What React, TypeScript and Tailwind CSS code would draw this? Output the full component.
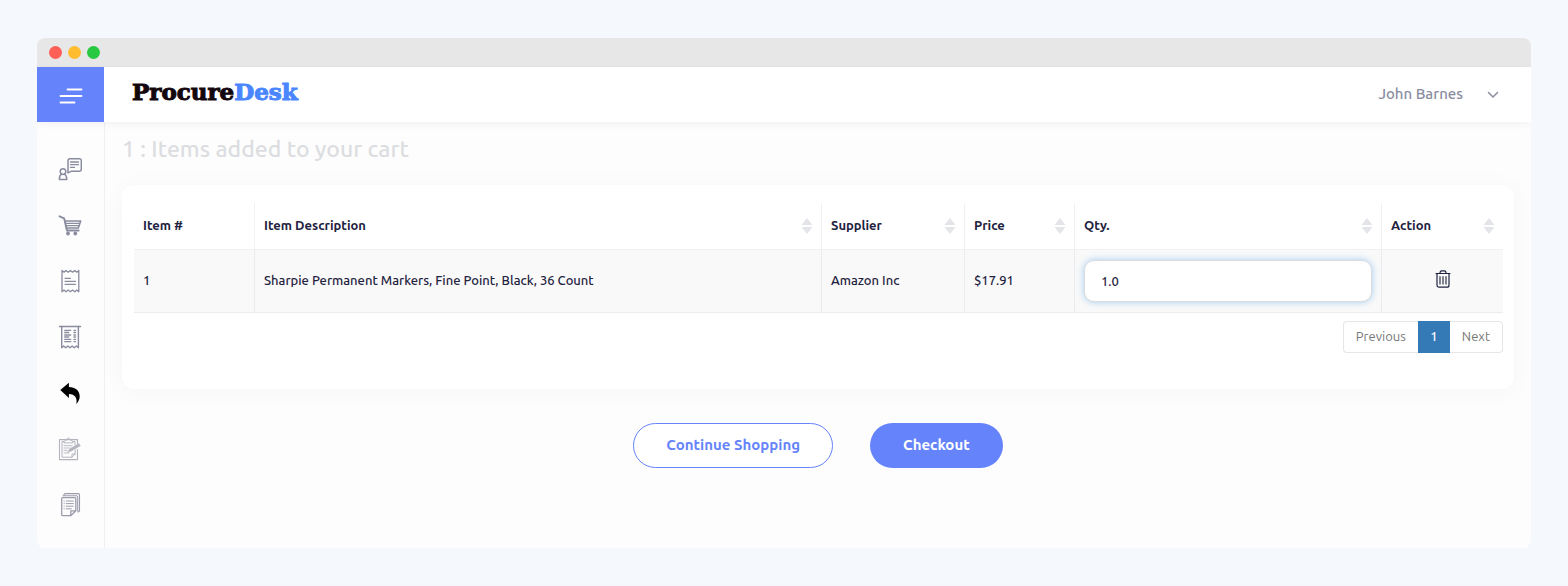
import { useState } from 'react';
import type { ReactNode } from 'react';

const NavIcon = (props: { className?: string; children: ReactNode }) => (
  <svg
    viewBox="0 0 24 24"
    fill="none"
    stroke="currentColor"
    strokeLinecap="round"
    strokeLinejoin="round"
    aria-hidden="true"
    className={`w-6 h-6 ${props.className ?? 'text-[#8a8c9f]'}`}
  >
    {props.children}
  </svg>
);

const navItems = [
  {
    label: 'Requests',
    icon: (
      <NavIcon>
        <path
          d="M11.7 1.7h9.6a2 2 0 0 1 2 2v8.6a2 2 0 0 1-2 2h-8.1L10 15.9V3.7a2 2 0 0 1 1.7-2z"
          strokeWidth="1.5"
        />
        <path d="M12.5 5h8M12.5 7.7h8M12.5 10.4h4" strokeWidth="1.3" />
        <circle cx="5" cy="14.6" r="2.8" strokeWidth="1.5" />
        <path d="M3.6 17.2C2 18 1.4 19.5 1.3 22.4h7.5C8.7 19.5 8 18 6.4 17.2" strokeWidth="1.5" />
      </NavIcon>
    ),
  },
  {
    label: 'Cart',
    icon: (
      <NavIcon>
        <path d="M1.5 3.3l4.6 2 2.9 12.2h11.7" strokeWidth="1.9" />
        <path d="M6.8 8h15.9l-2.4 7H8.5" strokeWidth="1.6" />
        <path d="M7.5 10.3h14M8 12.7h13" strokeWidth="1.2" />
        <circle cx="10" cy="20.5" r="1.9" fill="currentColor" stroke="none" />
        <circle cx="17.3" cy="20.5" r="1.9" fill="currentColor" stroke="none" />
      </NavIcon>
    ),
  },
  {
    label: 'Orders',
    icon: (
      <NavIcon>
        <path
          d="M4 1.5l2 1.7 2-1.7 2.2 1.7 2.2-1.7 2.2 1.7 2.2-1.7 2 1.7 2-1.7v21.3l-2-1.7-2 1.7-2.2-1.7-2.2 1.7-2.2-1.7L8 22.8l-2-1.7-2 1.7z"
          strokeWidth="1.3"
        />
        <path d="M7 9.3h5.5M7 12.3h10.5M7 15.3h10.5" strokeWidth="1.2" />
      </NavIcon>
    ),
  },
  {
    label: 'Invoices',
    icon: (
      <NavIcon>
        <path d="M1.5 1.5h21" strokeWidth="1.5" />
        <path
          d="M3.7 1.5v21.2l2-1.7 2.1 1.7L9.9 21l2.1 1.7 2.1-1.7 2.1 1.7 2.1-1.7 2.1 1.7V1.5"
          strokeWidth="1.4"
        />
        <path
          d="M6.7 5.3h6M6.7 7.5h4M6.7 10h6M6.7 12h4M6.7 14.4h6M6.7 16.6h6M16 5.3h1.5M16 7.5h1.5M16 10h1.5M16 12h1.5M16 14.4h1.5M16 16.6h1.5"
          strokeWidth="1.3"
        />
      </NavIcon>
    ),
  },
  {
    label: 'Returns',
    icon: (
      <NavIcon className="text-black">
        <path
          d="M2.3 9L10.9 1.7v4.4c6.4.1 10.6 3.5 10.8 9.2.1 2.8-1.2 5.6-3.4 7.6 1.3-5.8-1.3-9.7-7.4-9.9v4z"
          fill="currentColor"
          stroke="none"
        />
      </NavIcon>
    ),
  },
  {
    label: 'Approvals',
    icon: (
      <NavIcon className="text-[#b3b4be]">
        <path d="M19.5 12.5v10.1h-18V2.6h18v4" strokeWidth="1.1" />
        <path d="M6 4.5H4v15.7h10l3.2-3.2v-4M15 4.5h2v3.3M14 20.2V17h3.2" />
        <path d="M6 5.5c0-2 1.5-2.3 2.8-2.5.4-2.7 3-2.7 3.4 0 1.3.2 2.8.5 2.8 2.5z" />
        <path d="M6 8.7h8M6 11h6M6 13.3h3M6 16h5" strokeWidth="0.9" />
        <path d="M9.5 15l2.4-3.2 9-5.3 1.5 2.2-9 5.3z" fill="currentColor" strokeWidth="0.5" />
      </NavIcon>
    ),
  },
  {
    label: 'Reports',
    icon: (
      <NavIcon className="text-[#9b9cab]">
        <path
          d="M6 2V1.7A1.2 1.2 0 0 1 7.200.6h13.100a1.200 1.200 0 0 1 1.200 1.200V18l-1.500 1"
          strokeWidth="1.1"
        />
        <path d="M5 2.700h13.500a1.200 1.200 0 0 1 1.200 1.200v14" strokeWidth="1.1" />
        <path
          d="M4.700 4.700h12.100a1 1 0 0 1 1 1v12.100l-5 4.900H4.700a1 1 0 0 1-1-1v-16a1 1 0 0 1 1-1zM12.800 22.700v-4.900h5"
          strokeWidth="1.3"
        />
        <path d="M6 8h.3M8.3 8h7M6 10.6h.3M8.3 10.6h7M6 13.2h.3M8.3 13.2h7M6 15.8h.3M8.3 15.8h5" />
      </NavIcon>
    ),
  },
];

const columns = [
  { label: 'Item #', width: 'w-[121px]', sortable: false },
  { label: 'Item Description', width: '', sortable: true },
  { label: 'Supplier', width: 'w-[143px]', sortable: true },
  { label: 'Price', width: 'w-[110px]', sortable: true },
  { label: 'Qty.', width: 'w-[307px]', sortable: true },
  { label: 'Action', width: 'w-[121px]', sortable: true },
];

const SortArrows = () => (
  <svg viewBox="0 0 12 16" className="w-3 h-4 shrink-0 text-[#e4e5e8]" fill="currentColor" aria-hidden="true">
    <path d="M6 0l5.5 7H.5zM6 16L.5 9h11z" />
  </svg>
);

const TrashIcon = () => (
  <svg
    viewBox="0 0 16 18"
    className="w-4 h-[18px]"
    fill="none"
    stroke="currentColor"
    strokeLinecap="round"
    strokeLinejoin="round"
    aria-hidden="true"
  >
    <path d="M1 3.5h14M5 3.3c0-1.5.6-2.5 1.5-2.5h3c.9 0 1.5 1 1.5 2.5" strokeWidth="1.2" />
    <path d="M2 3.5v11.7a2 2 0 0 0 2 2h8a2 2 0 0 0 2-2V3.5" strokeWidth="1.2" />
    <path d="M5 6.5v7.5M8 6.5v7.5M11 6.5v7.5" strokeWidth="1.1" />
  </svg>
);

const Sidebar = () => (
  <aside className="w-[68px] shrink-0 flex flex-col border-r border-[#f0f0f2] pb-[15px]">
    <nav className="pt-[19px]">
      {navItems.map((item) => (
        <a key={item.label} href="#" aria-label={item.label} className="h-14 flex items-center justify-center pr-0.5">
          {item.icon}
        </a>
      ))}
    </nav>
  </aside>
);

const Header = () => (
  <header className="relative flex h-[55px] bg-white shadow-[0_2px_8px_rgba(0,0,0,0.05)]">
    <button aria-label="Toggle menu" className="w-[67px] bg-[#6583fb] text-white flex items-center justify-center">
      <svg viewBox="0 0 24 16" className="w-6 h-4 mt-0.5" stroke="currentColor" strokeWidth="1.8" strokeLinecap="round" aria-hidden="true">
        <path d="M8.5 1.5h14M1.5 8h21M1.5 14.5h14" />
      </svg>
    </button>
    <a
      href="#"
      className="ml-7 pb-1 flex items-center font-[Rockwell,'DejaVu_Serif',serif] font-bold text-[23px] text-[#14060d] [-webkit-text-stroke:1px]"
    >
      Procure<span className="text-[#4a86ff]">Desk</span>
    </a>
    <button className="ml-auto mr-8 flex items-center gap-x-6 font-medium text-[15px] text-[#8a8c9f]">
      John Barnes
      <svg viewBox="0 0 12 8" className="w-3 h-2" fill="none" stroke="currentColor" strokeWidth="1.5" strokeLinecap="round" strokeLinejoin="round" aria-hidden="true">
        <path d="M1.5 1.5L6 6l4.5-4.5" />
      </svg>
    </button>
  </header>
);

const CartTable = () => {
  const [quantity, setQuantity] = useState('1.0');
  return (
    <table className="w-full table-fixed border-separate border-spacing-0 text-[13px] text-left">
      <thead>
        <tr className="h-[47px]">
          {columns.map((column) => (
            <th
              key={column.label}
              scope="col"
              className={`${column.width} pl-[9px] pr-2 font-semibold border-r border-b border-[#f1f1f2] last:border-r-0`}
            >
              <div className="flex items-center justify-between">
                {column.label}
                {column.sortable && <SortArrows />}
              </div>
            </th>
          ))}
        </tr>
      </thead>
      <tbody>
        <tr className="h-[63px] bg-[#f9f9f9] font-medium *:border-r *:border-b *:border-[#ececee] *:px-[9px] *:last:border-r-0">
          <td>1</td>
          <td>Sharpie Permanent Markers, Fine Point, Black, 36 Count</td>
          <td>Amazon Inc</td>
          <td>$17.91</td>
          <td>
            <input
              type="text"
              aria-label="Quantity"
              value={quantity}
              onChange={(e) => setQuantity(e.target.value)}
              className="block w-full h-[42px] px-4 bg-white border border-[#dadce0] rounded-[10px] shadow-[0_0_7px_rgba(102,175,233,0.6)] focus:outline-none"
            />
          </td>
          <td>
            <button aria-label="Remove item" className="mx-auto block pb-1">
              <TrashIcon />
            </button>
          </td>
        </tr>
      </tbody>
    </table>
  );
};

const Pagination = () => (
  <nav aria-label="Pages" className="mt-2 flex justify-end text-[13px] text-[#777777]">
    <button className="h-8 px-3 bg-white border border-r-0 border-[#e6e6e6] rounded-l">Previous</button>
    <button className="h-8 w-8 bg-[#337ab7] text-white font-medium" aria-current="page">
      1
    </button>
    <button className="h-8 px-3 bg-white border border-l-0 border-[#e6e6e6] rounded-r">Next</button>
  </nav>
);

const App = () => {
  return (
    <div className="min-h-screen bg-[#f5f9fe] px-[37px] py-[38px] font-[Ubuntu,'Noto_Sans',sans-serif] text-[#1f2340]">
      <div className="rounded-lg overflow-hidden bg-[#fdfdfd]">
        <div className="h-[29px] bg-[#e7e7e7] flex items-center gap-x-1.5 px-3">
          <span className="w-[13px] h-[13px] rounded-full bg-[#ff5f57]" />
          <span className="w-[13px] h-[13px] rounded-full bg-[#febc2e]" />
          <span className="w-[13px] h-[13px] rounded-full bg-[#28c840]" />
        </div>
        <Header />
        <div className="flex">
          <Sidebar />
          <main className="flex-1 min-w-0 px-[17px]">
            <h1 className="h-[63px] pt-[11px] leading-8 text-[23px] font-medium text-[#dcdde1]">
              1 : Items added to your cart
            </h1>
            <section className="h-[204px] rounded-xl bg-white pl-3 pr-[11px] pt-[18px] shadow-[0_2px_24px_rgba(0,0,0,0.035)]">
              <CartTable />
              <Pagination />
            </section>
            <div className="mt-[34px] flex justify-center gap-x-[37px] font-semibold text-[15px]">
              <button className="h-[45px] px-8 rounded-full border border-[#6583fb] bg-white text-[#6583fb]">
                Continue Shopping
              </button>
              <button className="h-[45px] px-[33px] rounded-full bg-[#6583fb] text-white">Checkout</button>
            </div>
          </main>
        </div>
      </div>
    </div>
  );
};

export default App;
